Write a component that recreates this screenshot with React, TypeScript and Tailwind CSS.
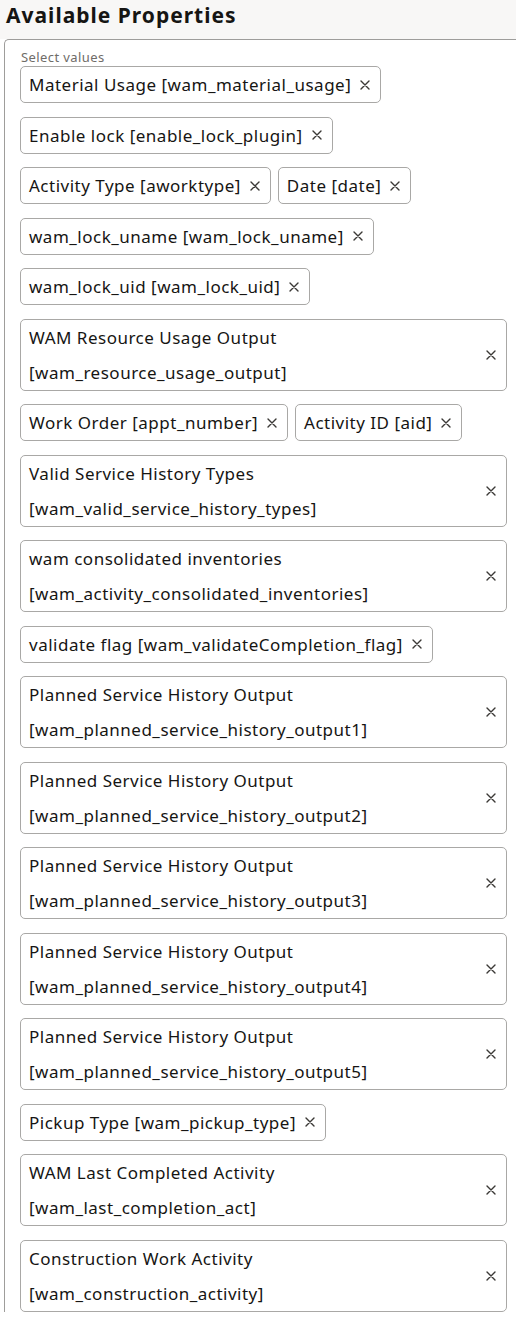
import React from "react"

type Chip = { lines: string[] }

const chips: Chip[] = [
  { lines: ["Material Usage [wam_material_usage]"] },
  { lines: ["Enable lock [enable_lock_plugin]"] },
  { lines: ["Activity Type [aworktype]"] },
  { lines: ["Date [date]"] },
  { lines: ["wam_lock_uname [wam_lock_uname]"] },
  { lines: ["wam_lock_uid [wam_lock_uid]"] },
  { lines: ["WAM Resource Usage Output", "[wam_resource_usage_output]"] },
  { lines: ["Work Order [appt_number]"] },
  { lines: ["Activity ID [aid]"] },
  { lines: ["Valid Service History Types", "[wam_valid_service_history_types]"] },
  { lines: ["wam consolidated inventories", "[wam_activity_consolidated_inventories]"] },
  { lines: ["validate flag [wam_validateCompletion_flag]"] },
  { lines: ["Planned Service History Output", "[wam_planned_service_history_output1]"] },
  { lines: ["Planned Service History Output", "[wam_planned_service_history_output2]"] },
  { lines: ["Planned Service History Output", "[wam_planned_service_history_output3]"] },
  { lines: ["Planned Service History Output", "[wam_planned_service_history_output4]"] },
  { lines: ["Planned Service History Output", "[wam_planned_service_history_output5]"] },
  { lines: ["Pickup Type [wam_pickup_type]"] },
  { lines: ["WAM Last Completed Activity", "[wam_last_completion_act]"] },
  { lines: ["Construction Work Activity", "[wam_construction_activity]"] },
]

function RemoveIcon() {
  return (
    <svg width="10" height="10" viewBox="0 0 10 10" className="shrink-0 text-[#3b3936]">
      <path d="M1 1 L9 9 M9 1 L1 9" stroke="currentColor" strokeWidth="1.4" strokeLinecap="round" />
    </svg>
  )
}

function ChipItem({ chip }: { chip: Chip }) {
  const wide = chip.lines.length > 1
  return (
    <div
      className={`flex items-center rounded-[5px] border border-[#a9a8a6] bg-white pl-2 pr-[10px] ${
        wide ? "w-full" : ""
      }`}
    >
      <div className="flex-1 whitespace-nowrap leading-[35px]">
        {chip.lines.map((l) => (
          <div key={l}>{l}</div>
        ))}
      </div>
      <span className={wide ? "ml-2" : "ml-[9px]"}>
        <RemoveIcon />
      </span>
    </div>
  )
}

export default function App() {
  return (
    <div
      className="min-h-[1320px] bg-white text-[#161513]"
      style={{ fontFamily: '"Noto Sans", "Open Sans", Arial, sans-serif' }}
    >
      {/* Header */}
      <div className="h-[39px] bg-[#f8f7f6] px-[6px] pt-[1px]">
        <h2 className="text-[21px] font-bold leading-[28px] tracking-[1px]">Available Properties</h2>
      </div>

      {/* Select box */}
      <div className="ml-[4px] rounded-tl-[5px] border-l border-t border-[#9e9d9b] pl-[15px] pr-[9px] pt-[10px]">
        <div className="pl-[1px] text-[13px] leading-[14px] tracking-[0.4px] text-[#6f6c68]">Select values</div>
        <div className="mt-[2px] flex flex-wrap gap-x-[7px] gap-y-[13.5px] text-[17px] tracking-[0.5px]">
          {chips.map((c, i) => (
            <ChipItem key={i} chip={c} />
          ))}
        </div>
      </div>
    </div>
  )
}
